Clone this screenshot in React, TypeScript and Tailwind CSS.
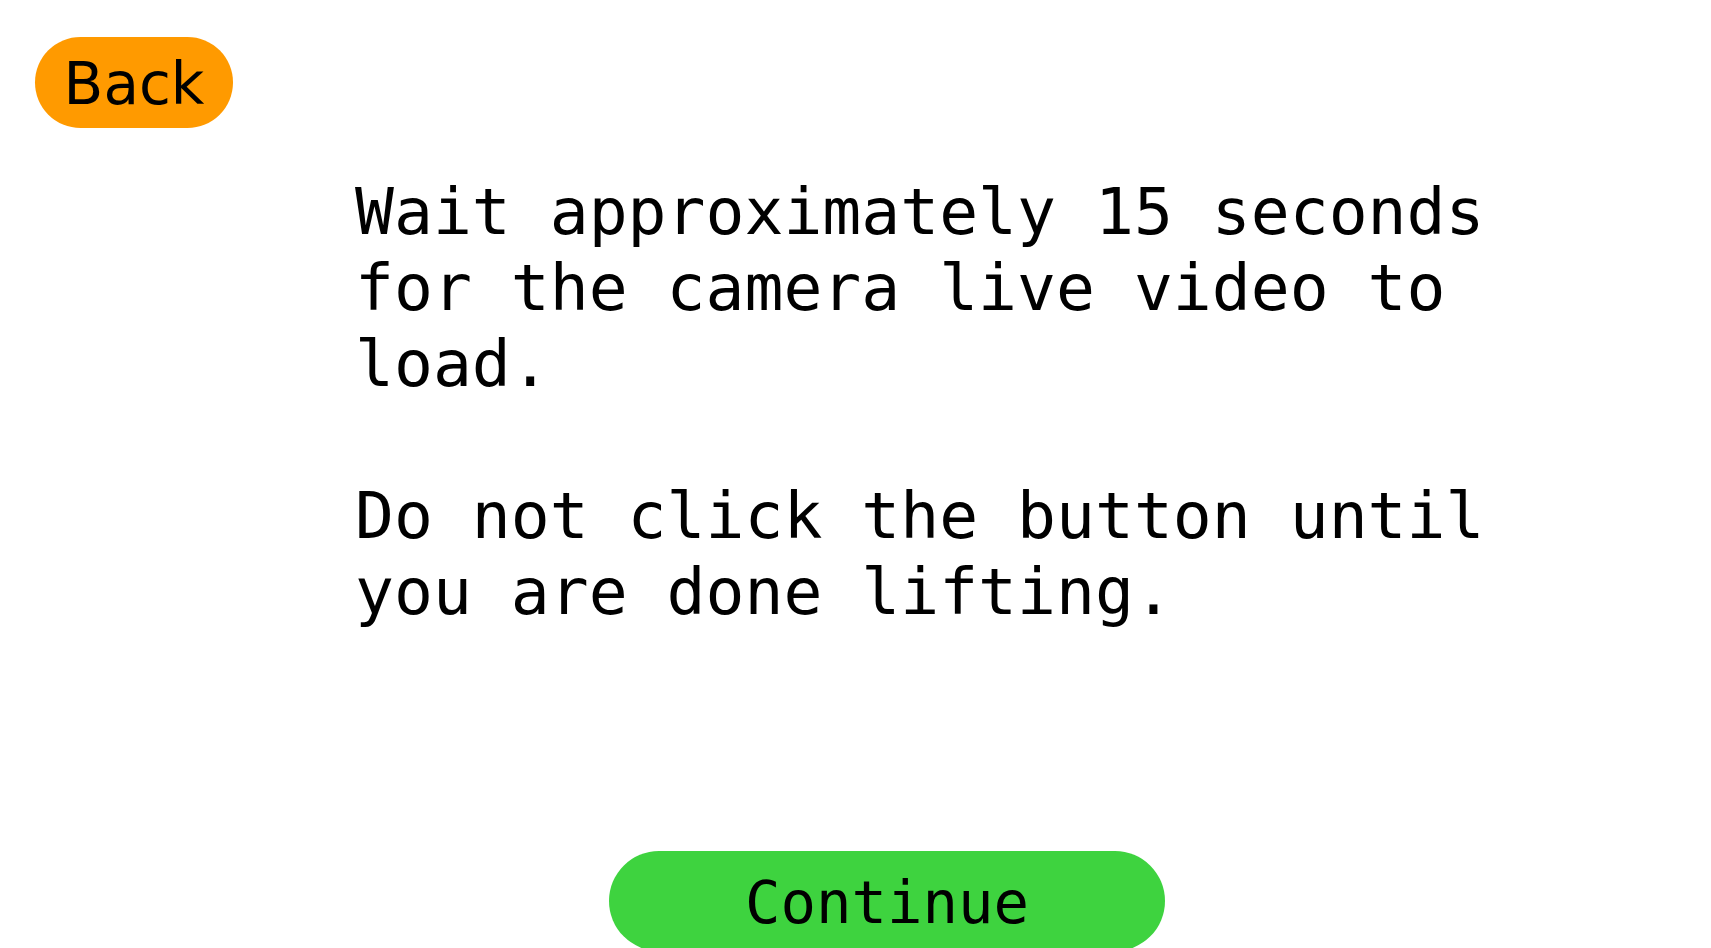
export default function App() {
  return (
    <div className="min-h-screen w-full bg-white flex flex-col overflow-hidden">
      <div className="pt-[37px] pl-[35px]">
        <button className="h-[91px] w-[198px] rounded-full bg-[#ff9a00] text-black text-[58px] leading-none font-['DejaVu_Sans',sans-serif] flex items-center justify-center pt-[2px]">
          Back
        </button>
      </div>

      <div className="mt-[46px] pl-[355px] w-[1560px]">
        <p className="w-[1200px] text-black text-[64.7px] leading-[76px] font-['DejaVu_Sans_Mono',monospace]">
          Wait approximately 15 seconds for the camera live video to load.
          <br />
          <br />
          Do not click the button until you are done lifting.
        </p>
      </div>

      <div className="mt-[221px] pl-[609px]">
        <button className="h-[100px] w-[556px] rounded-full bg-[#3ed33f] text-black text-[59px] leading-none font-['DejaVu_Sans_Mono',monospace] flex items-center justify-center pt-[2px]">
          Continue
        </button>
      </div>
    </div>
  )
}
